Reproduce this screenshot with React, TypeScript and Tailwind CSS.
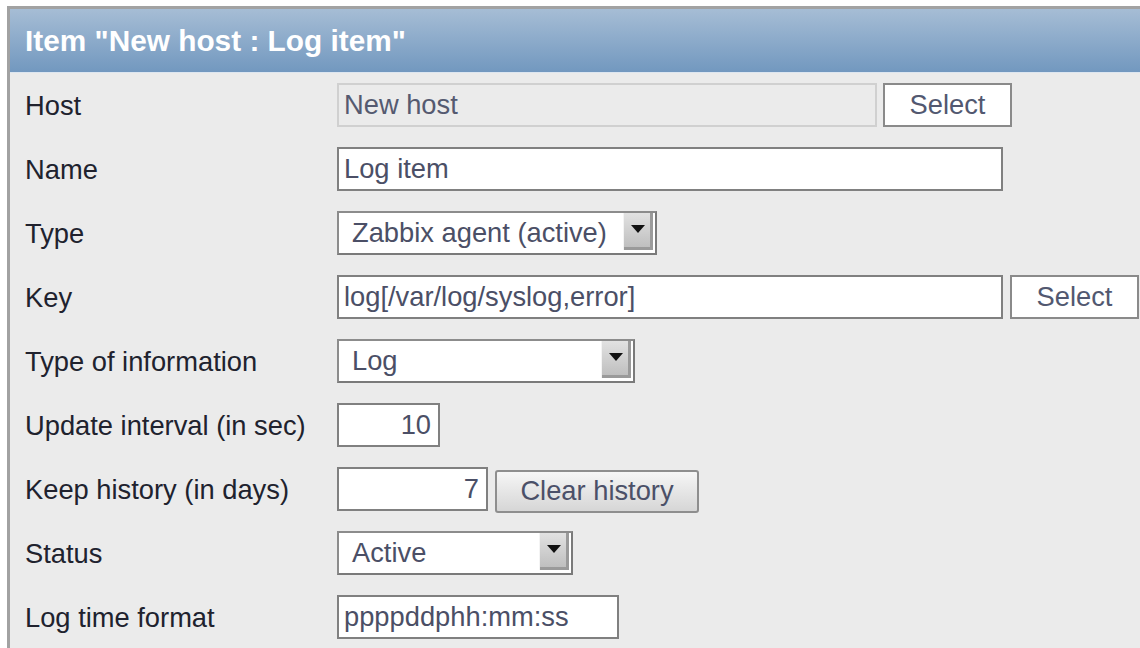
import React from "react";

const font = { fontFamily: '"Liberation Sans", Arial, sans-serif' };

function SelectBox({ value, width }: { value: string; width: string }) {
  return (
    <div
      className={`relative flex h-[44px] items-center bg-white border-2 border-t-[#8c8c8c] border-l-[#8c8c8c] border-b-[#7a7a7a] border-r-[#7a7a7a] ${width}`}
    >
      <span className="pl-[13px] text-[27.3px] leading-none text-[#4b4f66]">{value}</span>
      {/* dropdown arrow button */}
      <div className="absolute right-[2px] top-0 bottom-[3px] w-[30px] flex items-start justify-center pt-[12px] bg-gradient-to-b from-[#e2e2e2] to-[#bcbcbc] border-l border-[#f4f4f4] shadow-[inset_-3px_-3px_0_#9a9a9a]">
        <svg width="14" height="8" viewBox="0 0 14 8" className="mr-[2px]">
          <path d="M0 0 L14 0 L7 8 Z" fill="#111" />
        </svg>
      </div>
    </div>
  );
}

function TextInput({
  value,
  width,
  right,
  disabled,
}: {
  value: string;
  width: string;
  right?: boolean;
  disabled?: boolean;
}) {
  return (
    <div
      className={`flex h-[44px] items-center border-2 ${
        disabled ? "bg-[#ebebeb] border-[#d0d0d0] text-[#555a70]" : "bg-white border-[#808080] text-[#4b4f66]"
      } ${right ? "justify-end pr-[7px]" : "pl-[5px]"} ${width}`}
    >
      <span className="text-[27.3px] leading-none">{value}</span>
    </div>
  );
}

function SelectButton() {
  return (
    <div className="flex h-[44px] w-[129px] items-center justify-center bg-white border-2 border-[#8a8a8a]">
      <span className="text-[27.3px] leading-none text-[#525870]">Select</span>
    </div>
  );
}

function Row({ label, children }: { label: string; children: React.ReactNode }) {
  return (
    <div className="flex h-[64px] items-center">
      <div className="w-[312px] shrink-0 pt-[2px] text-[27.3px] leading-none text-[#20222e]">{label}</div>
      <div className="flex items-center">{children}</div>
    </div>
  );
}

export default function App() {
  return (
    <div className="w-[1140px] h-[648px] overflow-hidden bg-white pt-[6px] pl-[7px]" style={font}>
      <div className="h-full border-t-[3px] border-l-[3px] border-[#a2a2a2] bg-[#ebebeb]">
        <div className="h-[64px] flex items-center pl-[15px] bg-gradient-to-b from-[#a6bdd5] to-[#7298bf] border-b border-[#dde6f0]">
          <span className="text-[29.8px] font-bold text-white leading-none">
            Item "New host : Log item"
          </span>
        </div>
        <div className="pl-[15px]">
          <Row label="Host">
            <TextInput value="New host" width="w-[540px]" disabled />
            <div className="ml-[6px]">
              <SelectButton />
            </div>
          </Row>
          <Row label="Name">
            <TextInput value="Log item" width="w-[666px]" />
          </Row>
          <Row label="Type">
            <SelectBox value="Zabbix agent (active)" width="w-[320px]" />
          </Row>
          <Row label="Key">
            <TextInput value="log[/var/log/syslog,error]" width="w-[666px]" />
            <div className="ml-[7px]">
              <SelectButton />
            </div>
          </Row>
          <Row label="Type of information">
            <SelectBox value="Log" width="w-[298px]" />
          </Row>
          <Row label="Update interval (in sec)">
            <TextInput value="10" width="w-[103px]" right />
          </Row>
          <Row label="Keep history (in days)">
            <TextInput value="7" width="w-[151px]" right />
            <div className="ml-[7px] mt-[4px] flex h-[43px] w-[204px] items-center justify-center rounded-[3px] border-2 border-[#8e8e8e] bg-gradient-to-b from-[#f6f6f6] to-[#d6d6d6]">
              <span className="text-[27.3px] leading-none text-[#4b5068]">Clear history</span>
            </div>
          </Row>
          <Row label="Status">
            <SelectBox value="Active" width="w-[236px]" />
          </Row>
          <Row label="Log time format">
            <TextInput value="ppppddphh:mm:ss" width="w-[282px]" />
          </Row>
        </div>
      </div>
    </div>
  );
}
